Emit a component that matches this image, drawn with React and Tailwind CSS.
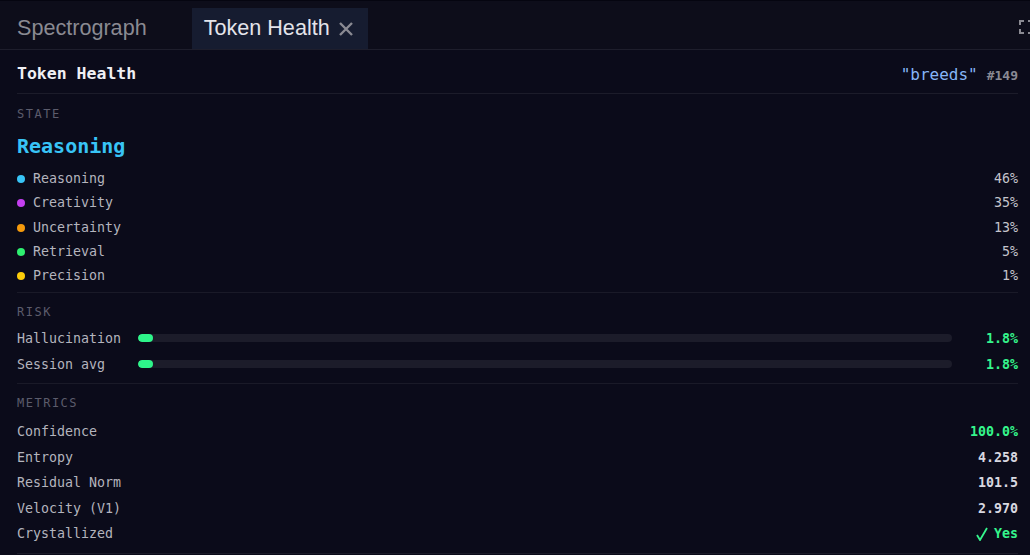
import React from 'react'

const mono = { fontFamily: '"DejaVu Sans Mono", "Liberation Mono", monospace' }
const sans = { fontFamily: '"Liberation Sans", Arial, sans-serif' }

const states = [
  { name: 'Reasoning', pct: '46%', dot: 'bg-[#38c4f6]' },
  { name: 'Creativity', pct: '35%', dot: 'bg-[#c43ff0]' },
  { name: 'Uncertainty', pct: '13%', dot: 'bg-[#f59a0c]' },
  { name: 'Retrieval', pct: '5%', dot: 'bg-[#2ef070]' },
  { name: 'Precision', pct: '1%', dot: 'bg-[#fccc0a]' },
]

const risks = [
  { name: 'Hallucination', value: 1.8 },
  { name: 'Session avg', value: 1.8 },
]

const metrics = [
  { name: 'Confidence', value: '100.0%', cls: 'text-[#35f58c]' },
  { name: 'Entropy', value: '4.258', cls: 'text-[#d8d8e0]' },
  { name: 'Residual Norm', value: '101.5', cls: 'text-[#d8d8e0]' },
  { name: 'Velocity (V1)', value: '2.970', cls: 'text-[#d8d8e0]' },
]

const SectionLabel = ({ children }) => (
  <div className="text-[12px] tracking-[1.5px] text-[#5c5c6c] leading-[16px]">{children}</div>
)

export default function App() {
  return (
    <div className="w-[1030px] h-[555px] bg-[#0b0b1a] overflow-hidden flex flex-col">
      {/* tabs */}
      <div className="h-[50px] shrink-0 bg-[#0d0d1a] border-b border-[#1e1e2c] flex items-end relative border-t border-t-[#050510]">
        <div className="h-[41px] pl-[17px] flex items-center text-[21.6px] text-[#8a8a92]" style={sans}>
          Spectrograph
        </div>
        <div className="h-[41px] ml-[45px] pl-[12px] pr-[15px] bg-[#161c30] flex items-center gap-[9px] text-[21.6px] text-[#e4e4ea]" style={sans}>
          Token Health
          <svg viewBox="0 0 14 14" className="w-[14px] h-[14px] mt-[1px]" fill="none" stroke="#8a8a92" strokeWidth="2.4">
            <path d="M1 1l12 12M13 1L1 13" />
          </svg>
        </div>
        <div className="absolute right-[-3px] top-[19px] w-[14px] h-[14px]">
          <svg viewBox="0 0 14 14" className="w-full h-full" fill="none" stroke="#8a8a92" strokeWidth="2">
            <path d="M1 5V1h4M9 1h4v4M13 9v4H9M5 13H1V9" />
          </svg>
        </div>
      </div>

      <div className="flex-1 pl-[17px] pr-[12px]" style={mono}>
        {/* header */}
        <div className="h-[44px] flex items-center justify-between border-b border-[#1c1c2a] pt-[6px]">
          <span className="text-[16.5px] font-bold text-[#f0f0f4]">Token Health</span>
          <span className="flex items-baseline gap-[9px]">
            <span className="text-[16px] text-[#86b6f8]">"breeds"</span>
            <span className="text-[13px] font-bold text-[#8a8a94]">#149</span>
          </span>
        </div>

        {/* state */}
        <div className="pt-[12px] pb-[4px] border-b border-[#1a1a28]">
          <SectionLabel>STATE</SectionLabel>
          <div className="mt-[12px] text-[20px] font-bold text-[#38c4f6] leading-[24px]">Reasoning</div>
          <div className="mt-[9px] flex flex-col">
            {states.map((s) => (
              <div key={s.name} className="h-[24.3px] flex items-center justify-between text-[13.3px] text-[#b4b4be]">
                <span className="flex items-center gap-[8px]">
                  <span className={`w-[8px] h-[8px] rounded-full ${s.dot}`} />
                  {s.name}
                </span>
                <span className="text-[#c4c4cc]">{s.pct}</span>
              </div>
            ))}
          </div>
        </div>

        {/* risk */}
        <div className="pt-[11px] pb-[6px] border-b border-[#1a1a28]">
          <SectionLabel>RISK</SectionLabel>
          <div className="mt-[5px] flex flex-col">
            {risks.map((r) => (
              <div key={r.name} className="h-[26px] flex items-center text-[13.3px] text-[#b4b4be]">
                <span className="w-[121px] shrink-0">{r.name}</span>
                <div className="flex-1 h-[8px] rounded-full bg-[#1c1c2a] overflow-hidden">
                  <div className="h-full rounded-full bg-[#2ef58a]" style={{ width: `${r.value}%` }} />
                </div>
                <span className="w-[66px] text-right font-bold text-[#35f58c]">{r.value}%</span>
              </div>
            ))}
          </div>
        </div>

        {/* metrics */}
        <div className="pt-[11px] pb-[6px] border-b border-[#1a1a28]">
          <SectionLabel>METRICS</SectionLabel>
          <div className="mt-[8px] flex flex-col">
            {metrics.map((m) => (
              <div key={m.name} className="h-[25.5px] flex items-center justify-between text-[13.3px] text-[#b4b4be]">
                <span>{m.name}</span>
                <span className={`font-bold ${m.cls}`}>{m.value}</span>
              </div>
            ))}
            <div className="h-[25.5px] flex items-center justify-between text-[13.3px] text-[#b4b4be]">
              <span>Crystallized</span>
              <span className="flex items-center gap-[6px] font-bold text-[#35f58c]">
                <svg viewBox="0 0 12 14" className="w-[12px] h-[14px]" fill="none" stroke="#35f58c" strokeWidth="1.8">
                  <path d="M1 8l3 5L11 1" />
                </svg>
                Yes
              </span>
            </div>
          </div>
        </div>
      </div>
    </div>
  )
}
